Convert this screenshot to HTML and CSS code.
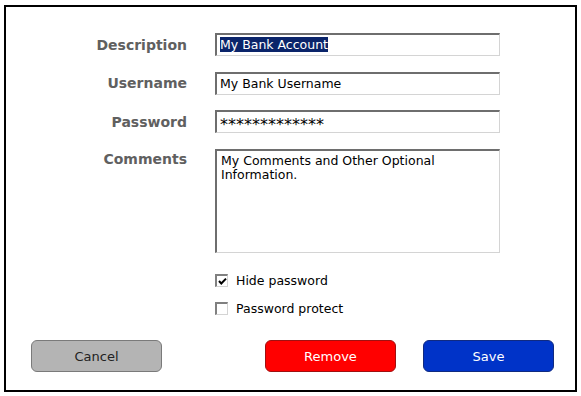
FILE: index.html
```html
<!DOCTYPE html>
<html lang="en">
<head>
    <meta charset="UTF-8">
    <meta name="viewport" content="width=device-width, initial-scale=1.0">
    <title>Edit Account</title>
    <link rel="stylesheet" href="styles.css">
</head>
<body>
    <div class="frame">
        <div class="form">
            <div class="label">Description</div>
            <div class="field"><span class="selected">My Bank Account</span></div>

            <div class="label">Username</div>
            <div class="field">My Bank Username</div>

            <div class="label">Password</div>
            <div class="field pass">*************</div>

            <div class="label top">Comments</div>
            <div class="field area">My Comments and Other Optional Information.</div>

            <div></div>
            <div class="checks">
                <div class="check">
                    <span class="box">
                        <svg viewBox="0 0 9 9"><path d="M1 4 L3.3 6.5 L8 1.6" fill="none" stroke="#000" stroke-width="2"/></svg>
                    </span>
                    Hide password
                </div>
                <div class="check">
                    <span class="box"></span>
                    Password protect
                </div>
            </div>
        </div>
        <div class="buttons">
            <button class="cancel">Cancel</button>
            <div class="right">
                <button class="remove">Remove</button>
                <button class="save">Save</button>
            </div>
        </div>
    </div>
</body>
</html>
```

FILE: styles.css
```css
*{
    font-family: "DejaVu Sans", Verdana, sans-serif;
    box-sizing: border-box;
}
body{
    margin: 0;
    background-color: #fff;
}
.frame{
    margin: 5px 4px;
    width: 573px;
    height: 387px;
    border: 2px solid #000;
    padding: 26px 0 0 24px;
}
.form{
    display: grid;
    grid-template-columns: 157px 285px;
    column-gap: 28px;
    row-gap: 15.5px;
}
.label{
    text-align: right;
    font-size: 14px;
    font-weight: bold;
    color: #606060;
    align-self: center;
}
.label.top{
    align-self: start;
    padding-top: 2px;
}
.field{
    height: 23px;
    border-top: 2px solid #6e6e6e;
    border-left: 2px solid #6e6e6e;
    border-right: 1px solid #d4d4d4;
    border-bottom: 1px solid #d4d4d4;
    font-size: 12.5px;
    color: #000;
    padding: 2px 3px;
    line-height: 16px;
    overflow: hidden;
}
.field .selected{
    background-color: #0a246a;
    color: #fff;
}
.field.pass{
    font-size: 16px;
    line-height: 20px;
    padding-top: 3px;
}
.field.area{
    height: 104px;
    padding: 3px 4px;
    line-height: 14px;
}
.checks{
    display: flex;
    flex-direction: column;
    gap: 13px;
    padding-top: 5px;
}
.check{
    display: flex;
    align-items: center;
    gap: 8px;
    font-size: 12.5px;
    color: #000;
    height: 15px;
}
.box{
    width: 13px;
    height: 13px;
    border-top: 2px solid #808080;
    border-left: 2px solid #808080;
    border-right: 1px solid #d4d4d4;
    border-bottom: 1px solid #d4d4d4;
    background-color: #fff;
    display: flex;
    align-items: center;
    justify-content: center;
}
.box svg{
    width: 9px;
    height: 9px;
}
.buttons{
    display: flex;
    justify-content: space-between;
    padding: 0 21px 0 1px;
    margin-top: 24px;
}
.right{
    display: flex;
    gap: 27px;
}
button{
    width: 131px;
    height: 32px;
    border-radius: 6px;
    font-size: 13px;
    cursor: pointer;
}
.cancel{
    background-color: #b4b4b4;
    border: 1px solid #7a7a7a;
    color: #222;
}
.remove{
    background-color: #ff0000;
    border: 1px solid #a01010;
    color: #fff;
}
.save{
    background-color: #0033c8;
    border: 1px solid #102a80;
    color: #fff;
}
```
